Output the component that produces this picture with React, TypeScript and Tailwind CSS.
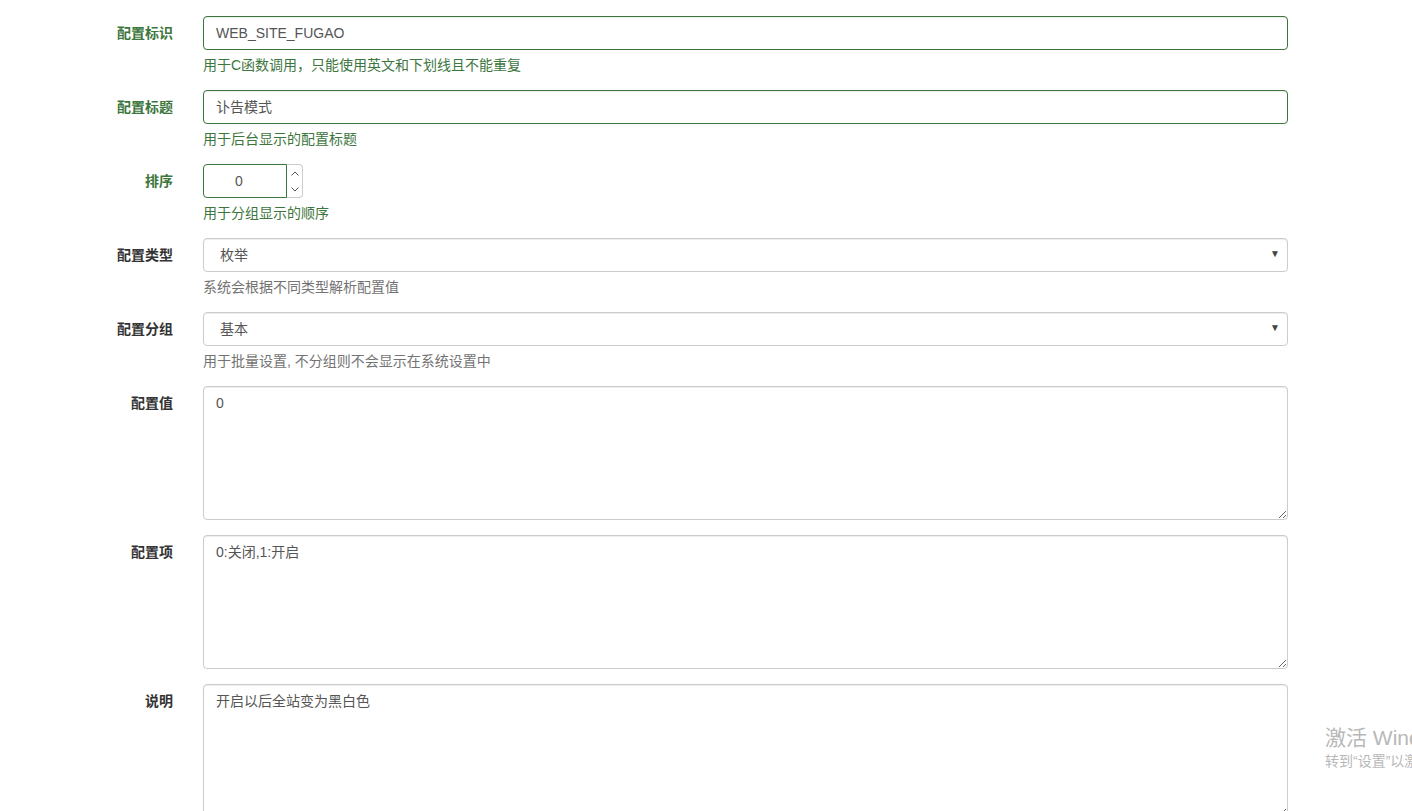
import React from 'react'

const font = { fontFamily: '"Liberation Sans", "Noto Sans CJK SC", sans-serif' }

type RowProps = {
  label: string
  help?: string
  success?: boolean
  children: React.ReactNode
}

function Row({ label, help, success, children }: RowProps) {
  return (
    <div className="flex mb-[15px]">
      <label
        className={`w-[188px] shrink-0 pr-[15px] pt-[7px] text-right text-[14px] leading-[20px] font-bold ${
          success ? 'text-[#3c763d]' : 'text-[#333]'
        }`}
      >
        {label}
      </label>
      <div className="w-[1085px] ml-[15px]">
        {children}
        {help && (
          <p
            className={`mt-[5px] text-[14px] leading-[20px] ${
              success ? 'text-[#3c763d]' : 'text-[#737373]'
            }`}
          >
            {help}
          </p>
        )}
      </div>
    </div>
  )
}

function Select({ value }: { value: string }) {
  return (
    <div className="relative flex h-[34px] items-center rounded-[4px] border border-[#ccc] bg-white pl-[16px] text-[14px] text-[#555] shadow-[inset_0_1px_1px_rgba(0,0,0,0.075)]">
      {value}
      <span className="absolute right-[7px] top-[10px] text-[10px] leading-none text-[#444]">▼</span>
    </div>
  )
}

function Area({ value }: { value: string }) {
  return (
    <textarea
      readOnly
      defaultValue={value}
      className="block h-[134px] w-full resize-y rounded-[4px] border border-[#ccc] bg-white px-[12px] py-[6px] text-[14px] leading-[20px] text-[#555] shadow-[inset_0_1px_1px_rgba(0,0,0,0.075)] outline-none"
      style={font}
    />
  )
}

export default function App() {
  return (
    <div className="relative h-[811px] overflow-hidden bg-white pt-[16px]" style={font}>
      <Row label="配置标识" help="用于C函数调用，只能使用英文和下划线且不能重复" success>
        <div className="flex h-[34px] items-center rounded-[4px] border border-[#3c763d] px-[12px] text-[14px] text-[#555] shadow-[inset_0_1px_1px_rgba(0,0,0,0.075)]">
          WEB_SITE_FUGAO
        </div>
      </Row>
      <Row label="配置标题" help="用于后台显示的配置标题" success>
        <div className="flex h-[34px] items-center rounded-[4px] border border-[#3c763d] px-[12px] text-[14px] text-[#555] shadow-[inset_0_1px_1px_rgba(0,0,0,0.075)]">
          讣告模式
        </div>
      </Row>
      <Row label="排序" help="用于分组显示的顺序" success>
        <div className="flex h-[34px]">
          <div className="flex w-[84px] items-center rounded-l-[4px] border border-[#3c763d] pl-[31px] text-[14px] text-[#555]">
            0
          </div>
          <div className="flex w-[16px] flex-col rounded-r-[4px] border border-l-0 border-[#ccc]">
            <div className="flex flex-1 items-center justify-center">
              <svg width="8" height="5" viewBox="0 0 8 5" fill="none" stroke="#555" strokeWidth="1">
                <path d="M0.5 4.5 L4 1 L7.5 4.5" />
              </svg>
            </div>
            <div className="flex flex-1 items-center justify-center">
              <svg width="8" height="5" viewBox="0 0 8 5" fill="none" stroke="#555" strokeWidth="1">
                <path d="M0.5 0.5 L4 4 L7.5 0.5" />
              </svg>
            </div>
          </div>
        </div>
      </Row>
      <Row label="配置类型" help="系统会根据不同类型解析配置值">
        <Select value="枚举" />
      </Row>
      <Row label="配置分组" help="用于批量设置, 不分组则不会显示在系统设置中">
        <Select value="基本" />
      </Row>
      <Row label="配置值">
        <Area value="0" />
      </Row>
      <Row label="配置项">
        <Area value="0:关闭,1:开启" />
      </Row>
      <Row label="说明">
        <Area value="开启以后全站变为黑白色" />
      </Row>

      <div className="absolute left-[1325px] top-[725px] whitespace-nowrap text-[#b8b8b8]">
        <div className="text-[21px] leading-[26px]">激活 Windows</div>
        <div className="text-[14px] leading-[20px]">转到“设置”以激活 Windows。</div>
      </div>
    </div>
  )
}
